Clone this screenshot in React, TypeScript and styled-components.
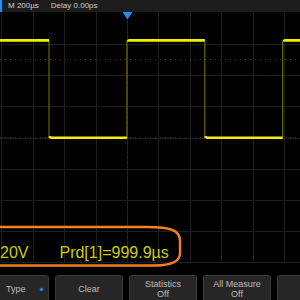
import React from "react";
import styled, { createGlobalStyle } from "styled-components";

const GlobalStyle = createGlobalStyle`
  html, body {
    margin: 0;
    padding: 0;
    background: #000;
  }
  body {
    font-family: "Liberation Sans", Arial, sans-serif;
  }
`;

const GRID_X0 = 127;
const GRID_DX = 31.4;
const GRID_Y0 = 137.5;
const GRID_DY = 31.2;

const PERIOD = 155.8;
const FIRST_FALL = 49;
const HIGH = 40.4;
const LOW = 137.8;

interface MenuItem {
  lines: string[];
  marker?: boolean;
}

const menu: MenuItem[] = [
  { lines: ["Type"], marker: true },
  { lines: ["Clear"] },
  { lines: ["Statistics", "Off"] },
  { lines: ["All Measure", "Off"] },
  { lines: [""] },
];

const buildWave = () => {
  let flat = `M -40 ${LOW}`;
  let edges = "";
  let x = FIRST_FALL - PERIOD;
  for (let i = 0; i < 4; i++) {
    const rise = x - PERIOD / 2;
    const fall = x;
    const nextRise = x + PERIOD / 2;
    flat += ` M ${rise + 1.2} ${HIGH + 1.2} Q ${rise + 1.3} ${HIGH} ${rise + 2.6} ${HIGH} H ${fall}`;
    flat += ` M ${fall + 0.8} ${LOW - 1.6} Q ${fall + 1} ${LOW} ${fall + 2.4} ${LOW} H ${nextRise}`;
    edges += ` M ${rise} ${LOW} V ${HIGH} M ${fall} ${HIGH} V ${LOW}`;
    x += PERIOD;
  }
  return { flat, edges };
};

const Grid = () => {
  const vx: number[] = [];
  for (let k = -4; k <= 5; k++) vx.push(Math.round(GRID_X0 + k * GRID_DX) + 0.5);
  const hy: number[] = [];
  for (let k = -3; k <= 4; k++) hy.push(Math.round(GRID_Y0 + k * GRID_DY) + 0.5);
  const wave = buildWave();
  return (
    <ScreenSvg viewBox="0 12 300 263" width={300} height={263}>
      {vx.map((x) => (
        <line key={"v" + x} x1={x} y1={12} x2={x} y2={262} stroke="#1f1f1f" strokeWidth={1} />
      ))}
      {hy.map((y) => (
        <line key={"h" + y} x1={0} y1={y} x2={300} y2={y} stroke="#1f1f1f" strokeWidth={1} />
      ))}
      <line x1={0} y1={59.5} x2={300} y2={59.5} stroke="#363636" strokeWidth={1} strokeDasharray="1 4" />
      <line x1={0} y1={137.5} x2={300} y2={137.5} stroke="#363636" strokeWidth={1} strokeDasharray="1 4" />
      <line x1={127.5} y1={12} x2={127.5} y2={262} stroke="#2e2e2e" strokeWidth={1} strokeDasharray="1 4" />
      <path d={wave.edges} stroke="#7c7c00" strokeWidth={1} fill="none" />
      <path d={wave.flat} stroke="#f0f000" strokeWidth={2.6} fill="none" />
      <polygon points="122.5,12 132.5,12 127.5,19.5" fill="#1e8fff" />
      <path
        d="M -5 227 H 148 C 170 227 180 230 180 241 V 253 C 180 262 171 265.5 155 265.5 H -5"
        stroke="#f5821f"
        strokeWidth={2.4}
        fill="none"
      />
    </ScreenSvg>
  );
};

export default function App() {
  return (
    <>
      <GlobalStyle />
      <Scope>
        <TopBar>
          <TopLabel>M 200µs</TopLabel>
          <TopLabel>Delay 0.00ps</TopLabel>
        </TopBar>
        <Screen>
          <Grid />
          <Measure>
            <MeasureValue>20V</MeasureValue>
            <MeasureValue>Prd[1]=999.9µs</MeasureValue>
          </Measure>
        </Screen>
        <Menu>
          {menu.map((m, i) => (
            <MenuButton key={i} $marker={!!m.marker}>
              <MenuText>
                {m.lines.map((l, j) => (
                  <span key={j}>{l}</span>
                ))}
              </MenuText>
              {m.marker && <Diamond />}
            </MenuButton>
          ))}
        </Menu>
      </Scope>
    </>
  );
}

const Scope = styled.div`
  width: 300px;
  height: 300px;
  overflow: hidden;
  background: #000;
  display: flex;
  flex-direction: column;
`;

const TopBar = styled.div`
  height: 12px;
  flex-shrink: 0;
  background: #1c1c1c;
  border-left: 2px solid #1e8fff;
  box-sizing: border-box;
  display: flex;
  align-items: center;
  gap: 12px;
  padding-left: 6px;
`;

const TopLabel = styled.span`
  font-size: 8px;
  line-height: 12px;
  color: #cfcfcf;
  white-space: nowrap;
`;

const Screen = styled.div`
  position: relative;
  height: 263px;
  flex-shrink: 0;
`;

const ScreenSvg = styled.svg`
  display: block;
`;

const Measure = styled.div`
  position: absolute;
  left: 0;
  top: 233px;
  display: flex;
  gap: 31px;
`;

const MeasureValue = styled.span`
  font-size: 16px;
  line-height: 16px;
  color: #cccc00;
  white-space: nowrap;
`;

const Menu = styled.div`
  display: flex;
  gap: 6px;
  margin-left: -19px;
`;

const MenuButton = styled.div<{ $marker: boolean }>`
  width: 68px;
  height: 28px;
  flex-shrink: 0;
  box-sizing: border-box;
  background: #262626;
  border: 1px solid #3a3a3a;
  border-radius: 3px;
  display: flex;
  align-items: center;
  justify-content: ${(p) => (p.$marker ? "space-between" : "center")};
  padding: ${(p) => (p.$marker ? "0 5px 0 24px" : "0")};
`;

const MenuText = styled.div`
  display: flex;
  flex-direction: column;
  align-items: center;
  font-size: 9px;
  line-height: 10px;
  color: #bdbdbd;
  white-space: nowrap;
`;

const Diamond = styled.span`
  width: 3px;
  height: 3px;
  background: #1e8fff;
  transform: rotate(45deg);
`;
